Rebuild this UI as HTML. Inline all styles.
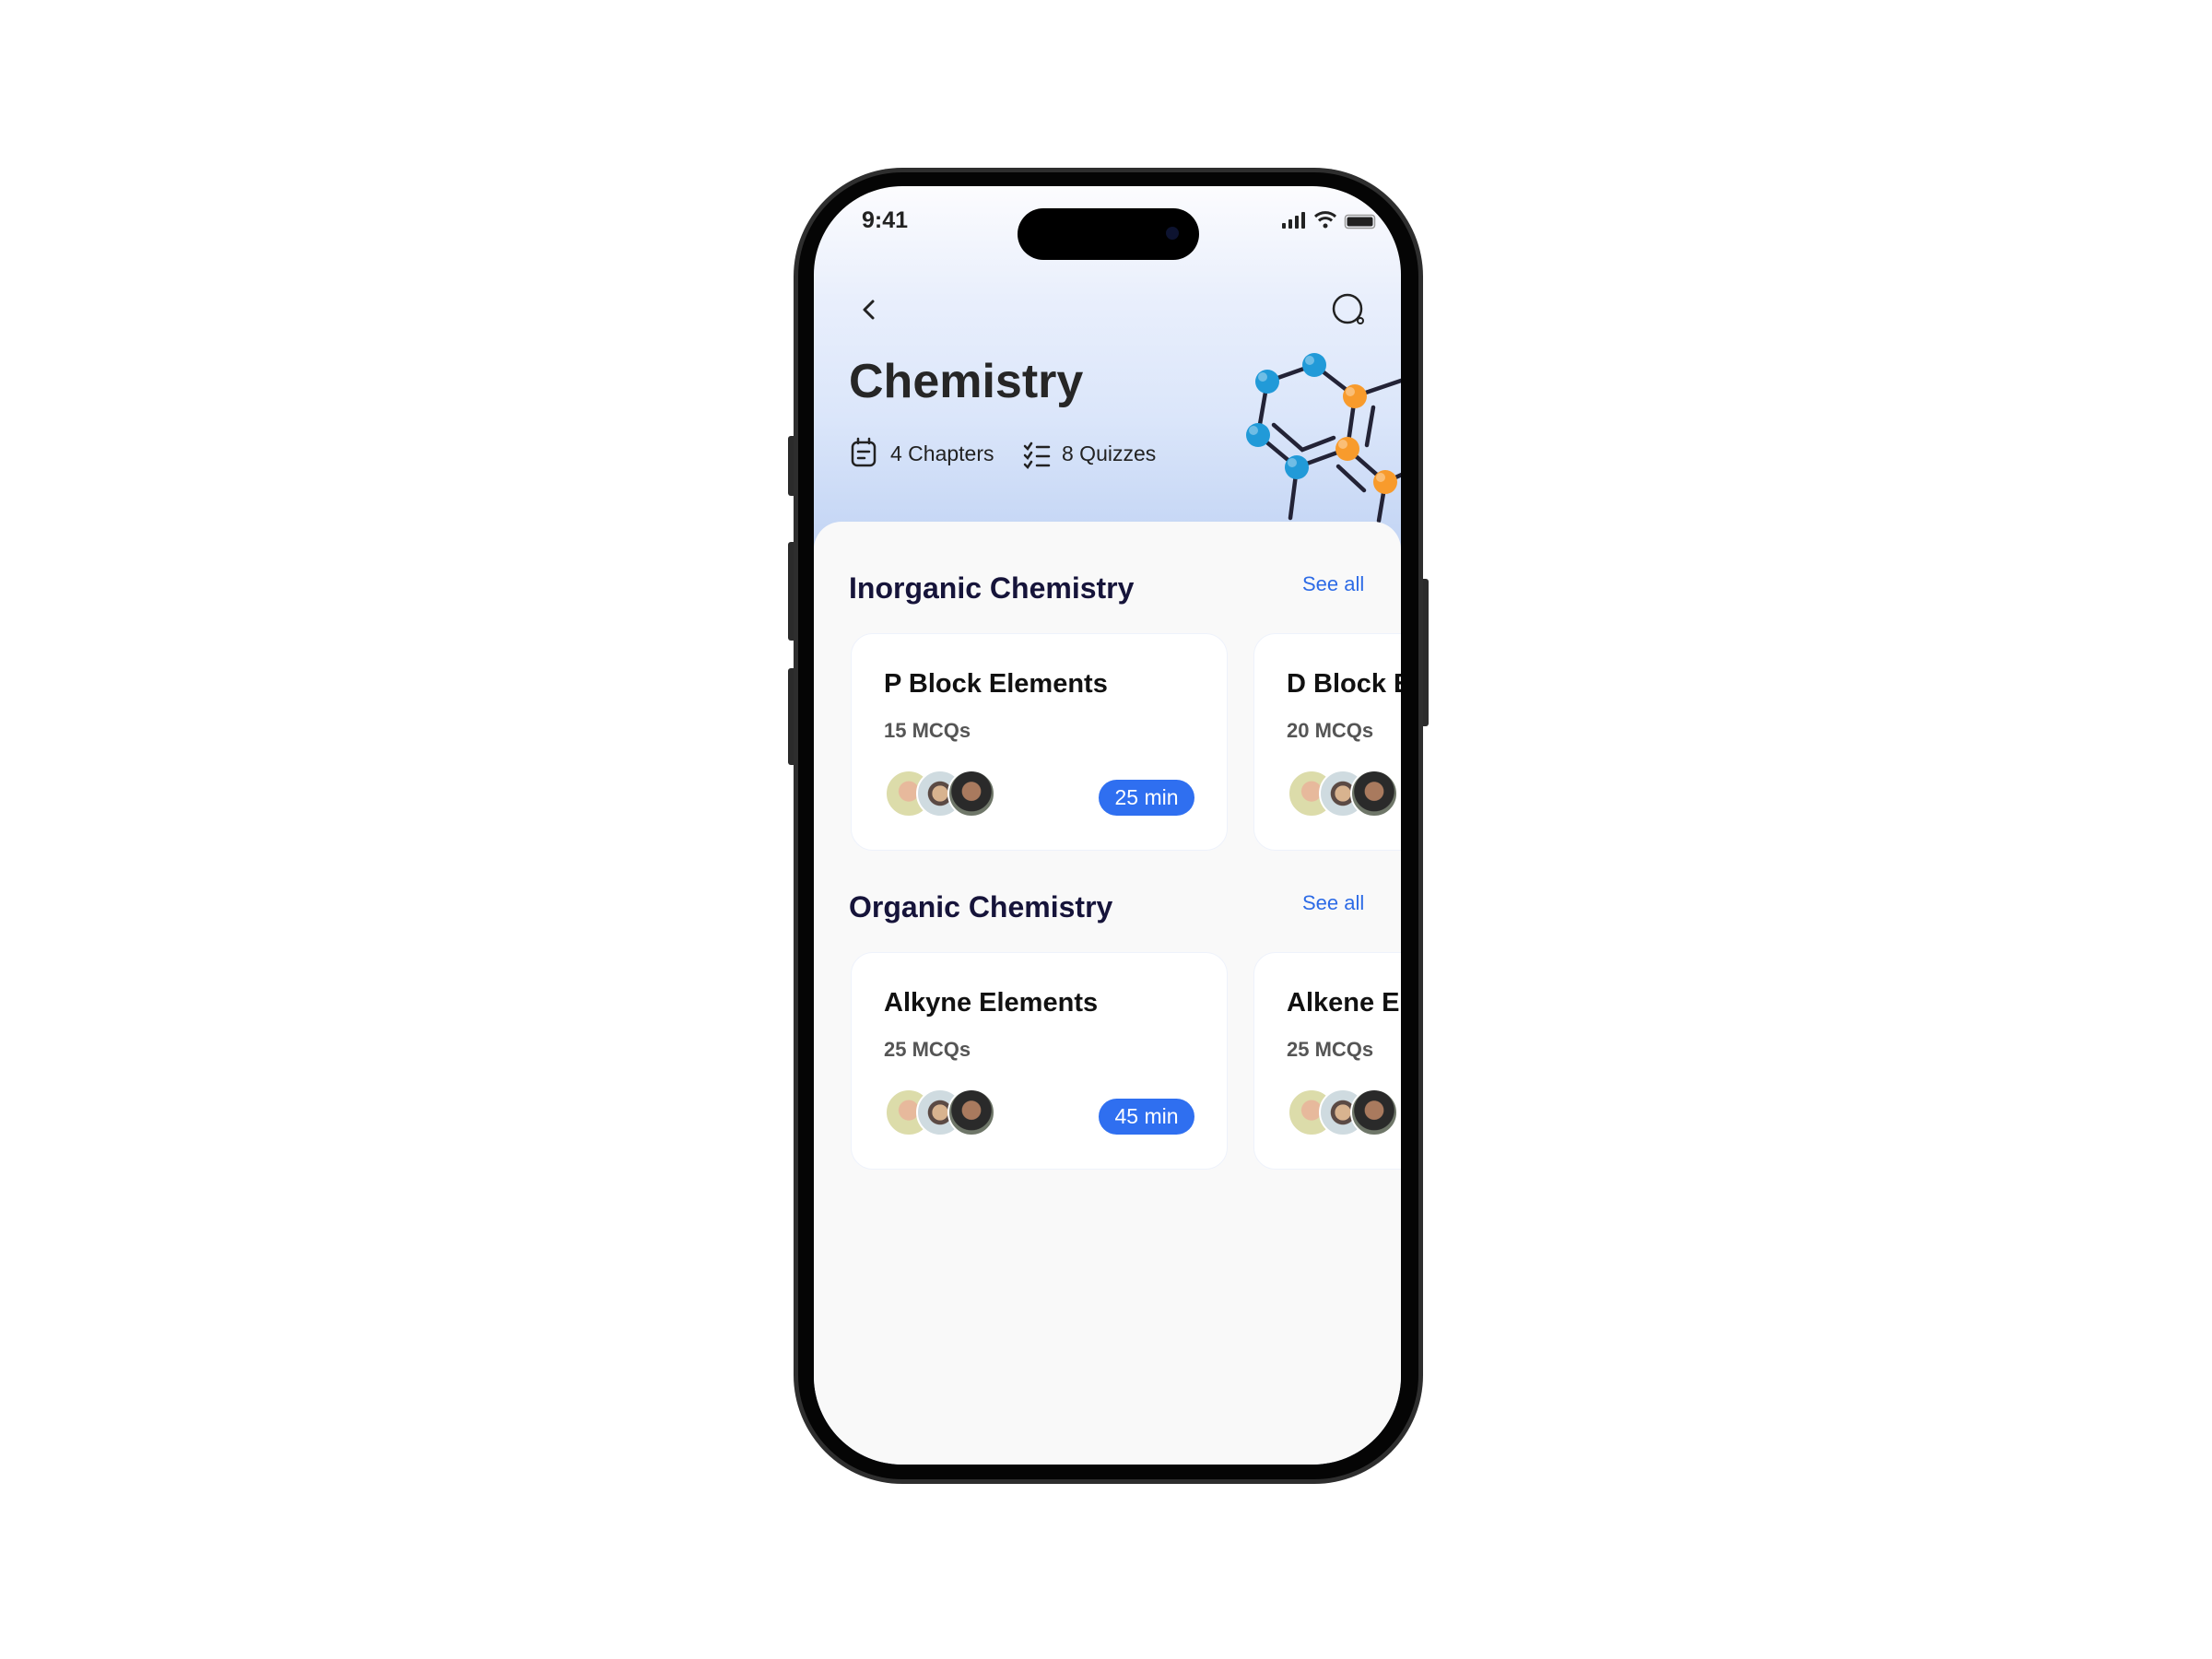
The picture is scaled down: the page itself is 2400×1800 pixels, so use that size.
<!DOCTYPE html>
<html><head><meta charset="utf-8">
<style>
*{margin:0;padding:0;box-sizing:border-box}
body{width:2400px;height:1800px;background:#fff;position:relative;overflow:hidden;font-family:"Liberation Sans",sans-serif}
.abs{position:absolute}
.btn{position:absolute;background:#2b2b2b;border-radius:3px}
.phone{left:861px;top:182px;width:683px;height:1428px;border-radius:118px;background:#2e2e2e;}
.phone2{left:866px;top:187px;width:673px;height:1418px;border-radius:113px;background:#050505;}
.screen{left:883px;top:202px;width:637px;height:1387px;border-radius:96px;overflow:hidden;background:linear-gradient(#fcfcfe 0px,#e9effc 120px,#dbe6fa 250px,#c6d7f5 370px,#c6d7f5 100%);}
.sheet{left:0;top:364px;width:637px;height:1100px;background:#f9f9f9;border-radius:30px 30px 0 0}
.h2{font-size:32px;font-weight:bold;color:#16143a}
.see{font-size:22px;color:#2d6be6}
.card{position:absolute;width:409px;height:236px;background:#fff;border-radius:24px;border:1px solid #eef2fb}
.ct{position:absolute;left:35px;top:38px;font-size:29px;font-weight:bold;color:#111;white-space:nowrap}
.cm{position:absolute;left:35px;top:92px;font-size:22px;font-weight:bold;color:#555}
.pill{position:absolute;left:268px;top:158px;width:104px;height:39px;border-radius:20px;background:#2f6ff0;color:#fff;font-size:23px;text-align:center;line-height:39px}
.av{position:absolute;top:147px;width:52px;height:52px;border-radius:50%;border:2px solid #fff}
</style></head><body>
<div class="btn" style="left:855px;top:473px;width:9px;height:65px"></div>
<div class="btn" style="left:855px;top:588px;width:9px;height:107px"></div>
<div class="btn" style="left:855px;top:725px;width:9px;height:105px"></div>
<div class="btn" style="left:1541px;top:628px;width:9px;height:160px"></div>
<div class="abs phone"></div>
<div class="abs phone2"></div>
<div class="abs screen">
  <div class="abs" style="left:52px;top:23px;font-size:25px;font-weight:bold;color:#222">9:41</div>
  <div class="abs" style="left:221px;top:24px;width:197px;height:56px;border-radius:28px;background:#000"></div>
  <div class="abs" style="left:382px;top:44px;width:14px;height:14px;border-radius:50%;background:#0d1330"></div>
  <svg class="abs" style="left:0;top:0" width="637" height="600">
    <g fill="#222"><rect x="508" y="40" width="4" height="6" rx="1"/><rect x="515" y="36" width="4" height="10" rx="1"/><rect x="522" y="32" width="4" height="14" rx="1"/><rect x="529" y="28" width="4" height="18" rx="1"/></g>
    <path d="M544 33 a16 16 0 0 1 22 0" stroke="#222" stroke-width="3" fill="none"/><path d="M548 37.5 a10 10 0 0 1 14 0" stroke="#222" stroke-width="3" fill="none"/><circle cx="555" cy="43" r="2.5" fill="#222"/>
    <rect x="576.5" y="31.5" width="32" height="14" rx="3" fill="none" stroke="#999" stroke-width="1.5"/><rect x="578.5" y="33.5" width="28" height="10" rx="2" fill="#222"/>
    <path d="M64 125 l-9 9 l9 9" stroke="#222" stroke-width="3" fill="none" stroke-linecap="round" stroke-linejoin="round"/>
    <circle cx="579" cy="133" r="15" stroke="#222" stroke-width="2.5" fill="none"/><circle cx="593" cy="146" r="3" stroke="#222" stroke-width="2" fill="none"/>
    <g stroke="#232336" stroke-width="4.5" fill="none" stroke-linecap="round">
      <path d="M492 212 L543 194 L587 228 L640 210"/><path d="M492 212 L482 270 L524 305 L579 285 L587 228"/>
      <path d="M499 259 L530 286 L564 273"/><path d="M607 240 L600 281"/>
      <path d="M579 285 L620 321"/><path d="M569 304 L597 330"/><path d="M524 305 L517 360"/>
      <path d="M620 321 L613 363"/><path d="M620 321 L640 312"/>
    </g>
    <g fill="#219ad8"><circle cx="492" cy="212" r="13"/><circle cx="543" cy="194" r="13"/><circle cx="482" cy="270" r="13"/><circle cx="524" cy="305" r="13"/></g>
    <g fill="#f89b2c"><circle cx="587" cy="228" r="13"/><circle cx="579" cy="285" r="13"/><circle cx="620" cy="321" r="13"/></g>
    <g fill="#fff" opacity=".35"><circle cx="487" cy="207" r="5"/><circle cx="538" cy="189" r="5"/><circle cx="477" cy="265" r="5"/><circle cx="519" cy="300" r="5"/><circle cx="582" cy="223" r="5"/><circle cx="574" cy="280" r="5"/><circle cx="615" cy="316" r="5"/></g>
    <g stroke="#222" stroke-width="2.5" fill="none" stroke-linecap="round"><rect x="42" y="278" width="24" height="25" rx="5"/><path d="M48 274v5M60 274v5M48 288h12M48 295h7"/>
    <path d="M229 282l3 3 4-6M229 292l3 3 4-6M229 302l3 3 4-6M242 283h13M242 293h13M242 303h13"/></g>
  </svg>
  <div class="abs" style="left:38px;top:182px;font-size:52px;font-weight:bold;color:#262626">Chemistry</div>
  <div class="abs" style="left:83px;top:277px;font-size:23px;color:#222">4 Chapters</div>
  <div class="abs" style="left:269px;top:277px;font-size:23px;color:#222">8 Quizzes</div>
  <div class="abs sheet">
    <div class="abs h2" style="left:38px;top:54px">Inorganic Chemistry</div>
    <div class="abs see" style="left:530px;top:55px">See all</div>
    <div class="card" style="left:40px;top:121px"><div class="ct">P Block Elements</div><div class="cm">15 MCQs</div>
      <div class="av" style="left:36px;background:radial-gradient(circle at 50% 45%,#e7b99c 0 30%,#dcdcaa 32%)"></div><div class="av" style="left:70px;background:radial-gradient(circle at 50% 50%,#d8b38f 0 25%,#5b4a44 26% 38%,#cfdbe0 40%)"></div><div class="av" style="left:104px;background:radial-gradient(circle at 50% 45%,#a97a5e 0 28%,#2a2a2a 30% 60%,#6f7769 62%)"></div>
      <div class="pill">25 min</div></div>
    <div class="card" style="left:477px;top:121px"><div class="ct">D Block Elements</div><div class="cm">20 MCQs</div>
      <div class="av" style="left:36px;background:radial-gradient(circle at 50% 45%,#e7b99c 0 30%,#dcdcaa 32%)"></div><div class="av" style="left:70px;background:radial-gradient(circle at 50% 50%,#d8b38f 0 25%,#5b4a44 26% 38%,#cfdbe0 40%)"></div><div class="av" style="left:104px;background:radial-gradient(circle at 50% 45%,#a97a5e 0 28%,#2a2a2a 30% 60%,#6f7769 62%)"></div></div>
    <div class="abs h2" style="left:38px;top:400px">Organic Chemistry</div>
    <div class="abs see" style="left:530px;top:401px">See all</div>
    <div class="card" style="left:40px;top:467px"><div class="ct">Alkyne Elements</div><div class="cm">25 MCQs</div>
      <div class="av" style="left:36px;background:radial-gradient(circle at 50% 45%,#e7b99c 0 30%,#dcdcaa 32%)"></div><div class="av" style="left:70px;background:radial-gradient(circle at 50% 50%,#d8b38f 0 25%,#5b4a44 26% 38%,#cfdbe0 40%)"></div><div class="av" style="left:104px;background:radial-gradient(circle at 50% 45%,#a97a5e 0 28%,#2a2a2a 30% 60%,#6f7769 62%)"></div>
      <div class="pill">45 min</div></div>
    <div class="card" style="left:477px;top:467px"><div class="ct">Alkene Elements</div><div class="cm">25 MCQs</div>
      <div class="av" style="left:36px;background:radial-gradient(circle at 50% 45%,#e7b99c 0 30%,#dcdcaa 32%)"></div><div class="av" style="left:70px;background:radial-gradient(circle at 50% 50%,#d8b38f 0 25%,#5b4a44 26% 38%,#cfdbe0 40%)"></div><div class="av" style="left:104px;background:radial-gradient(circle at 50% 45%,#a97a5e 0 28%,#2a2a2a 30% 60%,#6f7769 62%)"></div></div>
  </div>
</div>
</body></html>
